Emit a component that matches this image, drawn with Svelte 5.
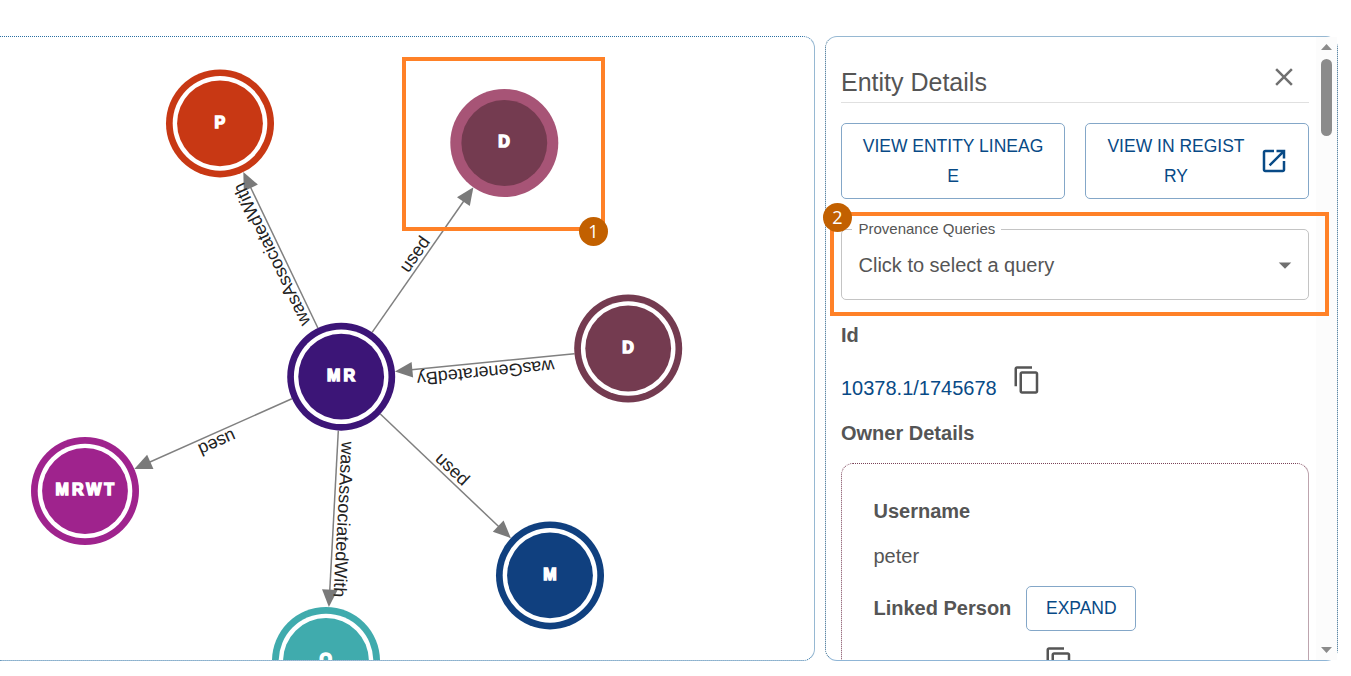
<script>
  const R = 54;
  const nodes = {
    p: { x: 220, y: 123.4, label: 'P', color: '#c83814' },
    d1: { x: 504.3, y: 143, label: 'D', color: '#743b50', selected: '#a75476' },
    d2: { x: 628.2, y: 348.5, label: 'D', color: '#743b50' },
    mr: { x: 341.2, y: 376.7, label: 'MR', color: '#3c1577' },
    mrwt: { x: 85, y: 491, label: 'MRWT', color: '#9f238d' },
    o: { x: 326, y: 661, label: 'O', color: '#40abad' },
    m: { x: 550, y: 575.4, label: 'M', color: '#10407f' }
  };
  const links = [
    ['mr', 'p', 'wasAssociatedWith'],
    ['mr', 'd1', 'used'],
    ['d2', 'mr', 'wasGeneratedBy'],
    ['mr', 'mrwt', 'used'],
    ['mr', 'o', 'wasAssociatedWith'],
    ['mr', 'm', 'used']
  ];
  const edges = links.map(([from, to, label]) => {
    const a = nodes[from];
    const b = nodes[to];
    const dx = b.x - a.x;
    const dy = b.y - a.y;
    return {
      label,
      length: Math.hypot(dx, dy),
      transform: `translate(${a.x} ${a.y}) rotate(${(Math.atan2(dy, dx) * 180) / Math.PI})`
    };
  });
</script>

{#snippet copyIcon()}
  <svg class="icon copy" viewBox="0 0 24 24"><path d="M16 1H4c-1.1 0-2 .9-2 2v14h2V3h12V1zm3 4H8c-1.1 0-2 .9-2 2v14c0 1.1.9 2 2 2h11c1.1 0 2-.9 2-2V7c0-1.1-.9-2-2-2zm0 16H8V7h11v14z" /></svg>
{/snippet}

<main>
  <section class="graph">
    <svg width="814" height="623" viewBox="0 37 814 623">
      {#each edges as e}
        <g transform={e.transform}>
          <line x1={R} x2={e.length - R - 14} y1="0" y2="0" stroke="#808080" stroke-width="1.5" />
          <path d="M{e.length - R} 0l-17.5 -7.8v15.6z" fill="#7a7a7a" />
        </g>
      {/each}
      {#each Object.values(nodes) as n}
        <g transform="translate({n.x} {n.y})">
          <circle r={R} fill={n.selected ?? n.color} />
          {#if !n.selected}<circle r="47.3" fill="#fff" />{/if}
          <circle r="42.9" fill={n.color} />
          <text class="node-label" x="1.3" y="4.2">{n.label}</text>
        </g>
      {/each}
      {#each edges as e}
        <text class="edge-label" transform={e.transform} x={e.length / 2} y="-4">{e.label}</text>
      {/each}
    </svg>
  </section>

  <aside class="details">
    <div class="content">
      <header>
        <h1>Entity Details</h1>
        <svg class="icon close" viewBox="0 0 24 24"><path d="M19 6.41 17.59 5 12 10.59 6.41 5 5 6.41 10.59 12 5 17.59 6.41 19 12 13.41 17.59 19 19 17.59 13.41 12z" /></svg>
      </header>
      <div class="actions">
        <button><span>VIEW ENTITY LINEAGE</span></button>
        <button class="registry">
          <span>VIEW IN REGISTRY</span>
          <svg class="icon" viewBox="0 0 24 24"><path d="M19 19H5V5h7V3H5c-1.11 0-2 .9-2 2v14c0 1.1.89 2 2 2h14c1.1 0 2-.9 2-2v-7h-2v7zM14 3v2h3.59l-9.83 9.83 1.41 1.41L19 6.41V10h2V3h-7z" /></svg>
        </button>
      </div>
      <div class="select">
        <span class="legend">Provenance Queries</span>
        <span>Click to select a query</span>
        <svg class="icon" viewBox="0 0 24 24"><path d="m7 10 5 5 5-5z" /></svg>
      </div>
      <h2 class="id-title">Id</h2>
      <div class="id-row"><span class="link">10378.1/1745678</span>{@render copyIcon()}</div>
      <h2>Owner Details</h2>
      <div class="owner">
        <h2>Username</h2>
        <p>peter</p>
        <div class="person"><h2>Linked Person</h2><button class="expand">EXPAND</button></div>
        <div class="next">{@render copyIcon()}</div>
      </div>
    </div>
    <div class="scrollbar">
      <svg width="11" height="6" viewBox="0 0 11 6"><path d="M0 6 5.5 0 11 6z" /></svg>
      <div class="thumb"></div>
      <svg class="down" width="11" height="6" viewBox="0 0 11 6"><path d="M0 0h11L5.5 6z" /></svg>
    </div>
  </aside>

  <div class="mark one"><b>1</b></div>
  <div class="mark two"><b>2</b></div>
</main>

<style>
  :global(body) { background: #fff; overflow: hidden; }
  * { box-sizing: border-box; }
  main {
    position: relative;
    width: 1351px;
    height: 676px;
    padding-top: 36px;
    display: flex;
    align-items: flex-start;
    gap: 10px;
    overflow: hidden;
    font: 20px/30px Arial, "Liberation Sans", sans-serif;
    color: #555;
  }
  h1, h2, p { margin: 0; }
  h1 { font-size: 25px; font-weight: 400; line-height: 30px; }
  h2 { font-size: 20px; font-weight: 700; line-height: 30px; }
  .graph {
    width: 815px;
    height: 625px;
    border: 1px dotted #2a6fa3;
    border-left: 0;
    border-right: 1px solid #96b8d2;
    border-radius: 0 12px 12px 0;
  }
  .graph svg { display: block; }
  .node-label {
    font-size: 16px;
    font-weight: 700;
    letter-spacing: 3px;
    text-anchor: middle;
    fill: #fff;
    stroke: #fff;
    stroke-width: 1.5px;
  }
  .edge-label { font-size: 18px; text-anchor: middle; fill: #222; }
  .details {
    width: 513px;
    height: 625px;
    display: flex;
    border: 1px dotted #2a6288;
    border-top: 1px solid #96b8d2;
    border-bottom: 1px solid #8fb5d6;
    border-radius: 12px;
  }
  .content {
    width: 490px;
    height: 623px;
    padding: 0 7px 0 15px;
    overflow: hidden;
  }
  header {
    height: 66px;
    display: flex;
    align-items: flex-end;
    justify-content: space-between;
    border-bottom: 1px solid #e0e0e0;
  }
  header h1 { margin-bottom: 5px; }
  .icon { width: 30px; height: 30px; flex: none; display: block; fill: currentColor; }
  .close { margin: 0 10px 10px 0; color: #707070; }
  .actions { display: flex; gap: 20px; margin-top: 20px; }
  button {
    width: 224px;
    height: 76px;
    display: flex;
    align-items: center;
    gap: 10px;
    padding: 0 18px;
    background: #fff;
    border: 1px solid #84a7c8;
    border-radius: 5px;
    font: 17.5px/30px Arial, "Liberation Sans", sans-serif;
    color: #084a86;
  }
  button span { flex: 1; word-break: break-all; text-align: center; }
  .registry { padding: 0 19px 0 17px; }
  .select {
    position: relative;
    height: 71px;
    margin-top: 30px;
    padding: 0 8px 0 16.5px;
    display: flex;
    align-items: center;
    justify-content: space-between;
    border: 1px solid #c4c4c4;
    border-radius: 5px;
  }
  .select .icon { color: #707070; }
  .legend {
    position: absolute;
    left: 10px;
    top: -11px;
    width: 149px;
    padding-left: 6.5px;
    background: #fff;
    font-size: 15px;
    line-height: 20px;
    white-space: nowrap;
  }
  .id-title { margin-top: 20px; }
  .id-row { height: 38px; margin: 15px 0; display: flex; gap: 15px; }
  .id-row span { margin-top: 8px; }
  .link { color: #084a86; }
  .owner {
    height: 240px;
    margin-top: 15px;
    padding: 32px 31.5px 0;
    border: 1px dotted #7a4258;
    border-right: 1px solid #bda4ae;
    border-radius: 12px;
  }
  .owner p { margin-top: 15px; }
  .person { display: flex; align-items: center; margin-top: 15px; gap: 15px; }
  .person h2 { margin-bottom: 2px; }
  .expand { width: 110px; height: 45px; justify-content: center; padding-bottom: 2px; }
  .next { margin: 15px 0 0 170px; }
  .scrollbar {
    width: 21px;
    height: 623px;
    flex: none;
    background: #fcfcfc;
    display: flex;
    flex-direction: column;
    align-items: center;
    padding: 7px 0;
  }
  .scrollbar svg { fill: #8b8b8b; }
  .thumb { width: 11px; height: 77px; margin-top: 9px; border-radius: 6px; background: #8b8b8b; }
  .down { margin-top: auto; }
  .mark { position: absolute; border: 4px solid #ff8127; }
  .mark b {
    position: absolute;
    width: 29px;
    height: 29px;
    border-radius: 50%;
    background: #c26000;
    color: #fff;
    font: 400 18px/28px "Open Sans", sans-serif;
    text-align: center;
  }
  .one { left: 402px; top: 57px; width: 203px; height: 174px; }
  .one b { right: -7px; bottom: -19px; }
  .two { left: 830px; top: 212px; width: 499px; height: 104px; }
  .two b { left: -11px; top: -13px; }
</style>
